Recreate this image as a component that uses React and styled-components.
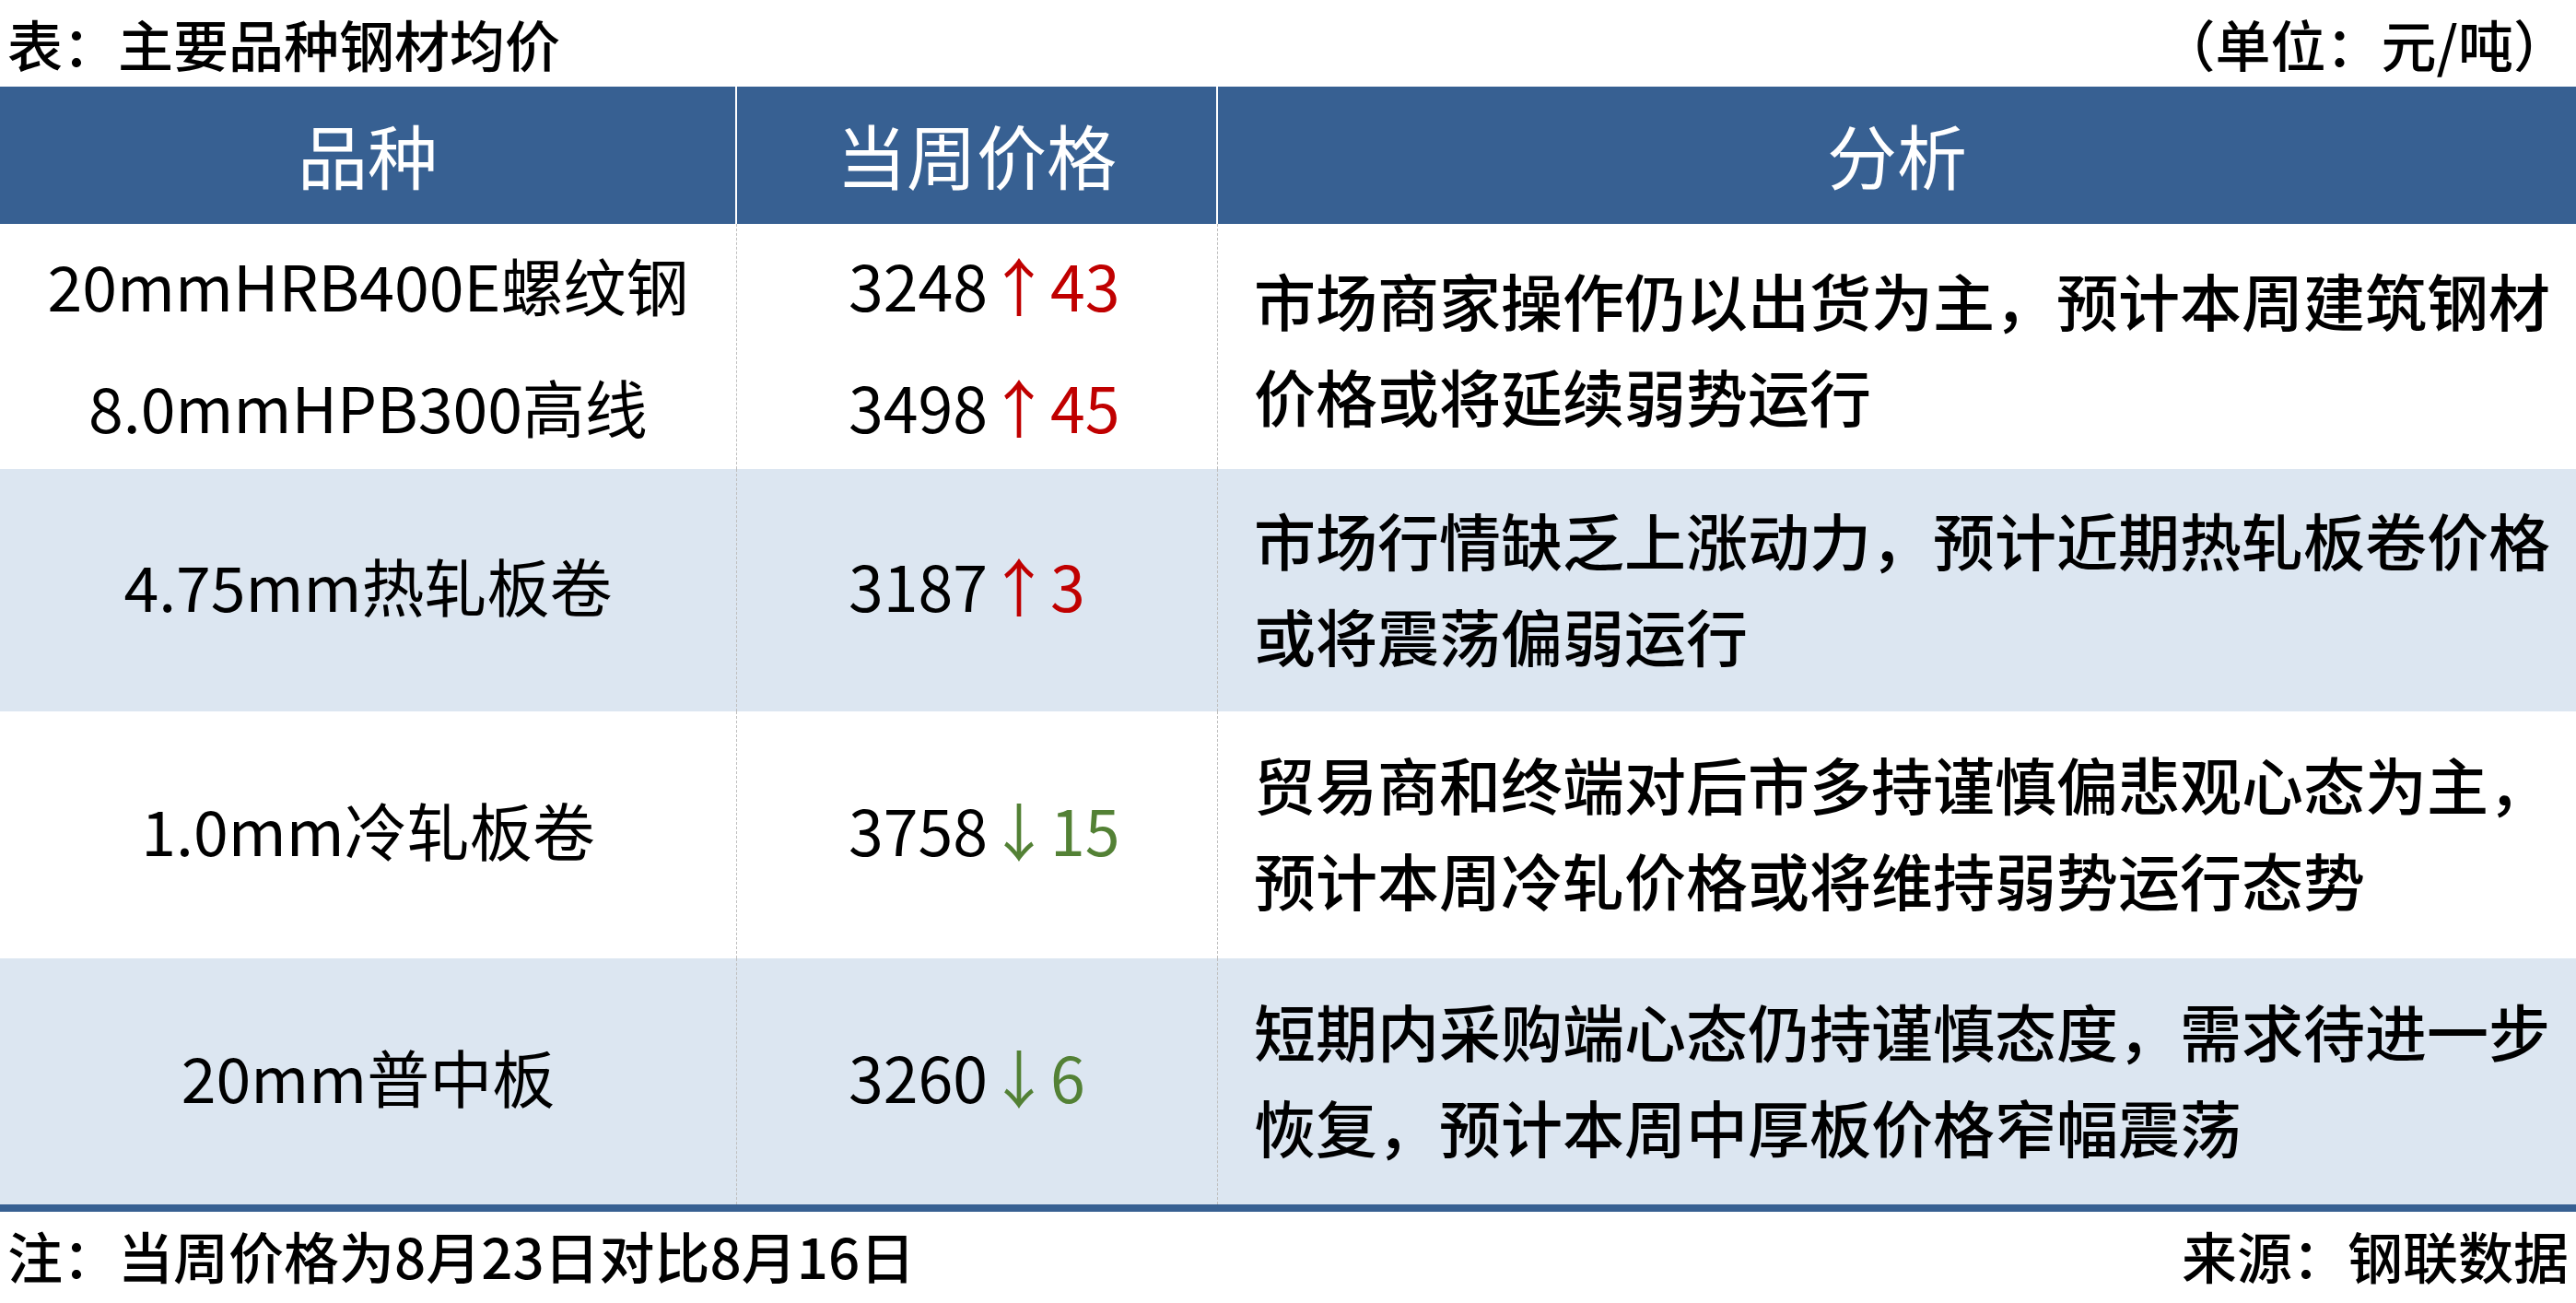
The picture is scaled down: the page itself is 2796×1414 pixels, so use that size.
import styled, { createGlobalStyle } from "styled-components";

const GlobalStyle = createGlobalStyle`
    html, body {
        margin: 0;
        padding: 0;
        background: #ffffff;
    }
    body {
        font-family: "Noto Sans CJK SC", "Noto Sans", sans-serif;
        color: #000000;
    }
`;

const Page = styled.div({
    width: '2796px',
    height: '1414px',
    display: 'flex',
    flexDirection: 'column',
    overflow: 'hidden',
});

const Caption = styled.div({
    height: '94px',
    display: 'flex',
    alignItems: 'center',
    justifyContent: 'space-between',
    padding: '0 8px 0 8px',
    fontSize: '60px',
    fontWeight: '500',
    lineHeight: '1',
    whiteSpace: 'nowrap',
});

const Table = styled.div({
    display: 'flex',
    flexDirection: 'column',
    borderBottom: '8px solid #376092',
});

const Row = styled.div`
    display: grid;
    grid-template-columns: 800px 522px 1fr;
    height: ${(p) => p.$h}px;
    background: ${(p) => (p.$shade ? '#dce6f1' : '#ffffff')};
`;

const HeadCell = styled.div`
    background: #376092;
    color: #ffffff;
    font-size: 76px;
    font-weight: 400;
    display: flex;
    align-items: center;
    justify-content: center;
    padding-bottom: 4px;
    border-right: ${(p) => (p.$last ? 'none' : '2px solid #ffffff')};
`;

// name / price / analysis cells share the dashed divider
const Cell = styled.div`
    display: flex;
    flex-direction: column;
    align-items: ${(p) => (p.$align === 'center' ? 'center' : 'flex-start')};
    justify-content: center;
    padding-left: ${(p) => (p.$align === 'price' ? '121px' : p.$align === 'note' ? '39px' : '0')};
    padding-bottom: ${(p) => (p.$align === 'note' ? '8px' : '12px')};
    border-right: ${(p) => (p.$align === 'note' ? 'none' : '1px dashed #bfbfbf')};
    font-size: ${(p) => (p.$align === 'note' ? '67px' : '68px')};
    font-weight: ${(p) => (p.$align === 'note' ? 500 : 400)};
    line-height: ${(p) => (p.$align === 'note' ? '104px' : '132px')};
    white-space: nowrap;
`;

const Change = styled.span`
    color: ${(p) => (p.$up ? '#c00000' : '#538135')};
`;

const rows = [
    {
        names: ['20mmHRB400E螺纹钢', '8.0mmHPB300高线'],
        prices: [[3248, true, 43], [3498, true, 45]],
        note: ['市场商家操作仍以出货为主，预计本周建筑钢材', '价格或将延续弱势运行'],
        h: 266,
    },
    {
        names: ['4.75mm热轧板卷'],
        prices: [[3187, true, 3]],
        note: ['市场行情缺乏上涨动力，预计近期热轧板卷价格', '或将震荡偏弱运行'],
        h: 263,
        shade: true,
    },
    {
        names: ['1.0mm冷轧板卷'],
        prices: [[3758, false, 15]],
        note: ['贸易商和终端对后市多持谨慎偏悲观心态为主，', '预计本周冷轧价格或将维持弱势运行态势'],
        h: 268,
    },
    {
        names: ['20mm普中板'],
        prices: [[3260, false, 6]],
        note: ['短期内采购端心态仍持谨慎态度，需求待进一步', '恢复，预计本周中厚板价格窄幅震荡'],
        h: 267,
        shade: true,
    },
];

const App = () => {
    return (
        <Page>
            <GlobalStyle />
            <Caption>
                <span>表：主要品种钢材均价</span>
                <span>（单位：元/吨）</span>
            </Caption>
            <Table>
                <Row $h={149}>
                    <HeadCell>品种</HeadCell>
                    <HeadCell>当周价格</HeadCell>
                    <HeadCell $last>分析</HeadCell>
                </Row>
                {rows.map((r, i) => (
                    <Row key={i} $h={r.h} $shade={r.shade}>
                        <Cell $align="center">
                            {r.names.map((n) => <div key={n}>{n}</div>)}
                        </Cell>
                        <Cell $align="price">
                            {r.prices.map(([p, up, d]) => (
                                <div key={p}>
                                    {p}<Change $up={up}>{up ? '↑' : '↓'}{d}</Change>
                                </div>
                            ))}
                        </Cell>
                        <Cell $align="note">
                            {r.note.map((l) => <div key={l}>{l}</div>)}
                        </Cell>
                    </Row>
                ))}
            </Table>
            <Caption>
                <span>注：当周价格为8月23日对比8月16日</span>
                <span>来源：钢联数据</span>
            </Caption>
        </Page>
    );
}

export default App;
